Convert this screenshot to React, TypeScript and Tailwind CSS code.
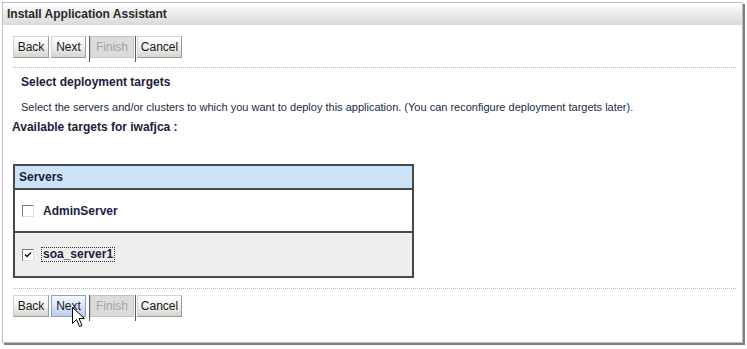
import React from 'react';

const font = "font-['Liberation_Sans',Arial,sans-serif]";

const Btn: React.FC<{ label: string; disabled?: boolean; hover?: boolean; w: string }> = ({ label, disabled, hover, w }) => {
  if (disabled) {
    return (
      <div className={`h-[22px] ${w} flex items-center justify-center border border-[#c4c4c4] bg-[#dcdcdc] text-[12px] text-[#a4a4a4]`}>
        {label}
      </div>
    );
  }
  return (
    <div
      className={`h-[22px] ${w} flex items-center justify-center border text-[12px] text-[#1a1a1a] ${
        hover
          ? 'bg-gradient-to-b from-[#f4f8ff] via-[#dbe6f8] to-[#b8cdee] border-[#8aa0c8]'
          : 'bg-gradient-to-b from-[#ffffff] via-[#f0f0ee] to-[#d6d6d0] border-[#9a9a9a] border-t-[#d4d4d4] border-l-[#d4d4d4]'
      }`}
    >
      {label}
    </div>
  );
};

const ButtonBar: React.FC<{ hoverNext?: boolean }> = ({ hoverNext }) => (
  <div className="flex items-start h-[26px]">
    <Btn label="Back" w="w-[36px]" />
    <div className="w-[2px]" />
    <Btn label="Next" w="w-[35px]" hover={hoverNext} />
    <div className="w-[3px]" />
    <div className="w-px h-[26px] bg-[#5a5a5a]" />
    <Btn label="Finish" w="w-[44px]" disabled />
    <div className="w-[1px]" />
    <div className="w-px h-[26px] bg-[#5a5a5a]" />
    <div className="w-[1px]" />
    <Btn label="Cancel" w="w-[45px]" />
  </div>
);

const Checkbox: React.FC<{ checked?: boolean }> = ({ checked }) => (
  <div className="w-[12px] h-[12px] border border-[#7a7a7a] border-r-[#dcdcdc] border-b-[#dcdcdc] bg-white flex items-center justify-center">
    {checked && (
      <svg width="8" height="8" viewBox="0 0 8 8">
        <path d="M1 3.5 L3 5.5 L7 1.5" stroke="#1a1a1a" strokeWidth="1.5" fill="none" />
      </svg>
    )}
  </div>
);

export default function App() {
  return (
    <div className={`w-[747px] h-[349px] bg-white pt-[2px] pl-[2px] ${font}`}>
      <div className="relative w-[741px] h-[341px] border border-[#bdb9d3] shadow-[2px_2px_0_#7e7e7e] bg-white">
        <div className="h-[22px] bg-gradient-to-b from-[#ffffff] via-[#ebebeb] to-[#dadada] flex items-center pl-[4px]">
          <span className="text-[12px] font-bold text-[#2a2a2a]">Install Application Assistant</span>
        </div>

        <div className="pl-[10px] pr-[6px]">
          <div className="mt-[11px]">
            <ButtonBar />
          </div>
          <div className="mt-[5px] border-t border-dotted border-[#bdbdbd]" />

          <div className="pl-[8px] mt-[7px] text-[12px] font-bold text-[#1c2040] leading-[14px]">Select deployment targets</div>
          <div className="pl-[8px] mt-[11px] text-[11px] text-[#222a44] leading-[14px]">
            Select the servers and/or clusters to which you want to deploy this application. (You can reconfigure deployment targets later).
          </div>
          <div className="-ml-[1px] mt-[6px] text-[12px] font-bold text-[#1c2040] leading-[14px]">
            Available targets for iwafjca :
          </div>

          <div className="mt-[30px] w-[401px] border-2 border-[#454a4a] text-[12px] font-bold text-[#1c2040]">
            <div className="h-[24px] bg-[#cce2f6] flex items-center pl-[4px] border-b-2 border-[#454a4a]">Servers</div>
            <div className="h-[43px] bg-white flex items-center pl-[7px] gap-[9px] border-b-2 border-[#454a4a]">
              <Checkbox />
              <span>AdminServer</span>
            </div>
            <div className="h-[43px] bg-[#eeeeee] flex items-center pl-[7px] gap-[8px]">
              <Checkbox checked />
              <span className="outline outline-1 outline-dotted outline-[#333] px-px leading-[13px]">soa_server1</span>
            </div>
          </div>

          <div className="mt-[10px] border-t border-dotted border-[#bdbdbd]" />
          <div className="mt-[6px]">
            <ButtonBar hoverNext />
          </div>
        </div>

        <svg className="absolute left-[69px] top-[304px]" width="13" height="21" viewBox="0 0 13 21">
          <path d="M0.5 0.5 L0.5 16.5 L4.5 12.5 L7.5 19.5 L10 18.5 L7 11.5 L12.5 11.5 Z" fill="white" stroke="black" strokeWidth="1" />
        </svg>
      </div>
    </div>
  );
}
